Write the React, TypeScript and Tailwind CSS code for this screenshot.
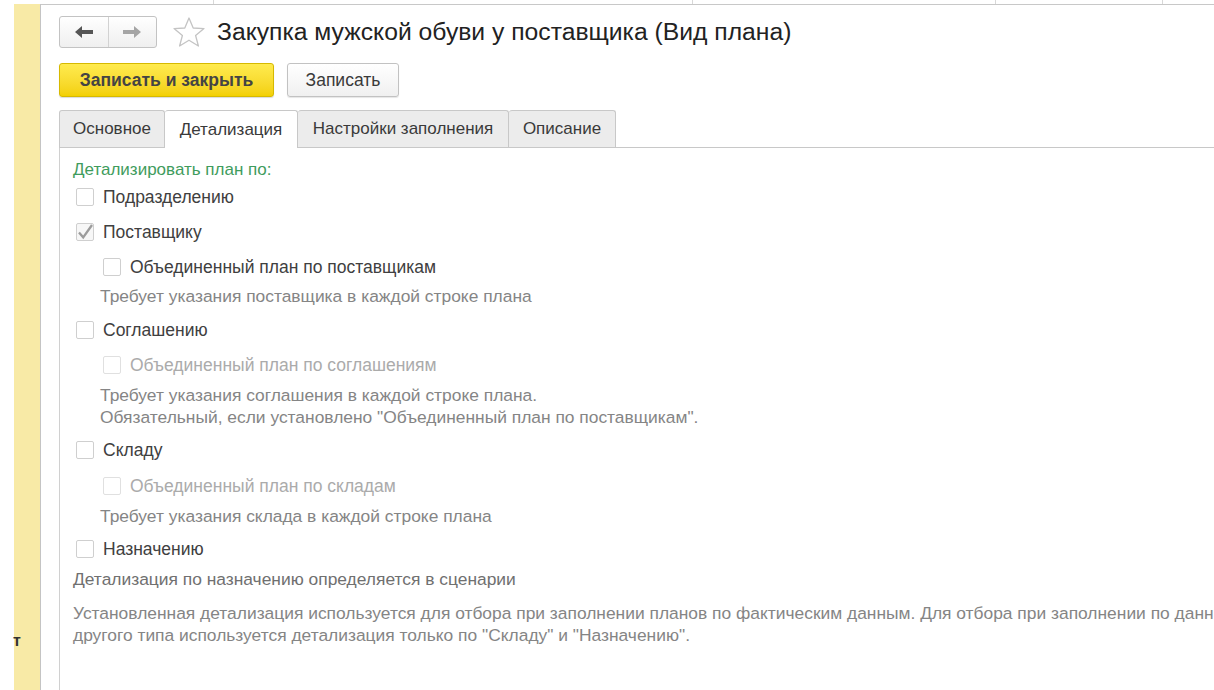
import React from 'react';

const font = { fontFamily: '"Liberation Sans", Arial, sans-serif' };

function Box({ checked = false, disabled = false }: { checked?: boolean; disabled?: boolean }) {
  return (
    <span
      className={
        'inline-flex items-center justify-center w-[18px] h-[18px] rounded-[2px] border shrink-0 ' +
        (disabled ? 'border-[#e0e0e0] bg-white' : checked ? 'border-[#cfcfcf] bg-[#f7f7f7]' : 'border-[#cfcfcf] bg-white')
      }
    >
      {checked && (
        <svg width="17" height="17" viewBox="0 0 16 16">
          <path d="M2 8 L6.2 12.8 L15 0.5" fill="none" stroke="#9c9c9c" strokeWidth="2.3" />
        </svg>
      )}
    </span>
  );
}

function Row({ label, checked, disabled, indent, className }: { label: string; checked?: boolean; disabled?: boolean; indent?: boolean; className: string }) {
  return (
    <div className={'flex items-center h-[30px] gap-[9px] ' + (indent ? 'pl-[30px] ' : 'pl-[3px] ') + className}>
      <Box checked={checked} disabled={disabled} />
      <span className={'text-[17.5px] ' + (disabled ? 'text-[#ababab]' : 'text-[#404040]')}>{label}</span>
    </div>
  );
}

function Hint({ children, className }: { children: React.ReactNode; className: string }) {
  return <div className={'h-[22px] leading-[22px] text-[17.4px] text-[#858585] ' + className}>{children}</div>;
}

export default function App() {
  return (
    <div className="w-[1214px] h-[690px] flex bg-white overflow-hidden" style={font}>
      {/* side strip */}
      <div className="w-[41px] shrink-0 h-full flex pt-[4px]">
        <div className="w-[14px]" />
        <div className="relative flex-1 bg-[#f8eaa6] border-r border-[#c4c4c4]">
          <span className="absolute left-[-1px] top-[625px] text-[16px] font-bold text-[#333]">т</span>
        </div>
      </div>

      <div className="relative flex-1 min-w-0 flex flex-col">
        {/* top ticks */}
        <div className="absolute left-[172px] top-0 w-px h-[4px] bg-[#d8d8d8]" />
        <div className="absolute left-[651px] top-0 w-px h-[4px] bg-[#d8d8d8]" />
        <div className="absolute left-[954px] top-0 w-px h-[4px] bg-[#d8d8d8]" />
        <div className="absolute left-[1121px] top-0 w-px h-[4px] bg-[#d8d8d8]" />

        <div className="mt-[4px] border-t border-[#c8c8c8] flex-1 flex flex-col pl-[18px]">
          {/* header */}
          <div className="mt-[11px] flex items-center h-[32px]">
            <div className="flex w-[98px] h-[32px] rounded-[3px] border border-[#c3c3c3] bg-gradient-to-b from-white to-[#efefef]">
              <div className="flex-1 flex items-center justify-center border-r border-[#d2d2d2]">
                <svg width="20" height="14" viewBox="0 0 20 14">
                  <path d="M1 7 L8 1 L8 5 L19 5 L19 9 L8 9 L8 13 Z" fill="#555" />
                </svg>
              </div>
              <div className="flex-1 flex items-center justify-center">
                <svg width="20" height="14" viewBox="0 0 20 14">
                  <path d="M19 7 L12 1 L12 5 L1 5 L1 9 L12 9 L12 13 Z" fill="#a5a5a5" />
                </svg>
              </div>
            </div>
            <svg className="ml-[15px]" width="34" height="32" viewBox="0 0 34 32">
              <path
                d="M17 2 L21.2 12 L32 12.6 L23.6 19.5 L26.4 30 L17 24.2 L7.6 30 L10.4 19.5 L2 12.6 L12.8 12 Z"
                fill="none"
                stroke="#c4c4c4"
                strokeWidth="1.3"
                strokeLinejoin="round"
              />
            </svg>
            <h1 className="ml-[11px] text-[24.7px] text-[#222] whitespace-nowrap">Закупка мужской обуви у поставщика (Вид плана)</h1>
          </div>

          {/* command bar */}
          <div className="mt-[15px] flex items-center gap-[13px] h-[34px]">
            <button className="w-[215px] h-[34px] rounded-[3px] border border-[#d6b900] bg-gradient-to-b from-[#ffeb4d] to-[#f3d000] text-[17.5px] font-bold text-[#444] shadow-[0_1px_1px_rgba(0,0,0,0.15)]">
              Записать и закрыть
            </button>
            <button className="w-[112px] h-[34px] rounded-[3px] border border-[#c2c2c2] bg-gradient-to-b from-white to-[#f0f0f0] text-[17.5px] text-[#3a3a3a] shadow-[0_1px_1px_rgba(0,0,0,0.1)]">
              Записать
            </button>
          </div>

          {/* tabs */}
          <div className="mt-[13px] flex items-end h-[38px] border-b border-[#c8c8c8]">
            <div className="w-[106px] h-[37px] flex items-center justify-center rounded-t-[3px] border border-b-0 border-[#c8c8c8] bg-[#ececec] text-[17px] text-[#3a3a3a]">Основное</div>
            <div className="w-[133px] h-[38px] mb-[-1px] flex items-center justify-center rounded-t-[3px] border border-b-0 border-[#c8c8c8] border-l-0 bg-white text-[17px] text-[#3a3a3a]">Детализация</div>
            <div className="w-[211px] h-[37px] flex items-center justify-center rounded-t-[3px] border border-b-0 border-[#c8c8c8] border-l-0 bg-[#ececec] text-[17px] text-[#3a3a3a]">Настройки заполнения</div>
            <div className="w-[107px] h-[37px] flex items-center justify-center rounded-t-[3px] border border-b-0 border-[#c8c8c8] border-l-0 bg-[#ececec] text-[17px] text-[#3a3a3a]">Описание</div>
          </div>

          {/* panel */}
          <div className="flex-1 border-l border-[#d0d0d0] pl-[13px] pt-[11px] flex flex-col">
            <div className="h-[22px] leading-[22px] text-[17px] text-[#3f9c5d]">Детализировать план по:</div>
            <Row className="mt-[1px]" label="Подразделению" />
            <Row className="mt-[5px]" label="Поставщику" checked />
            <Row className="mt-[5px]" label="Объединенный план по поставщикам" indent />
            <Hint className="mt-[3px] pl-[27px]">Требует указания поставщика в каждой строке плана</Hint>
            <Row className="mt-[8px]" label="Соглашению" />
            <Row className="mt-[5px]" label="Объединенный план по соглашениям" indent disabled />
            <Hint className="mt-[4px] pl-[27px]">Требует указания соглашения в каждой строке плана.</Hint>
            <Hint className="pl-[27px]">Обязательный, если установлено "Объединенный план по поставщикам".</Hint>
            <Row className="mt-[7px]" label="Складу" />
            <Row className="mt-[6px]" label="Объединенный план по складам" indent disabled />
            <Hint className="mt-[4px] pl-[27px]">Требует указания склада в каждой строке плана</Hint>
            <Row className="mt-[7px]" label="Назначению" />
            <Hint className="mt-[4px] !text-[#707070]">Детализация по назначению определяется в сценарии</Hint>
            <Hint className="mt-[12px] whitespace-nowrap">
              Установленная детализация используется для отбора при заполнении планов по фактическим данным. Для отбора при заполнении по данным
            </Hint>
            <Hint>другого типа используется детализация только по "Складу" и "Назначению".</Hint>
          </div>
        </div>
      </div>
    </div>
  );
}
